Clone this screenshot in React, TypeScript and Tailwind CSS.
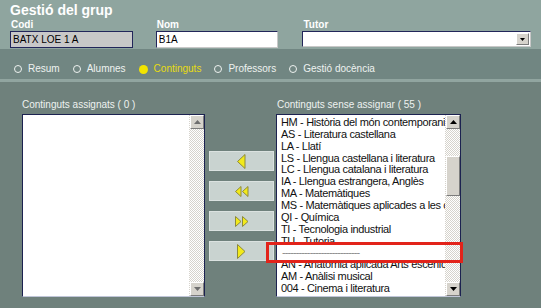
import React from "react";

const font = { fontFamily: '"Liberation Sans", Arial, sans-serif' };

const pending = [
  "HM - Història del món contemporani",
  "AS - Literatura castellana",
  "LA - Llatí",
  "LS - Llengua castellana i literatura",
  "LC - Llengua catalana i literatura",
  "IA - Llengua estrangera, Anglès",
  "MA - Matemàtiques",
  "MS - Matemàtiques aplicades a les ciències socials",
  "QI - Química",
  "TI - Tecnologia industrial",
  "TU - Tutoria",
  "---",
  "AN - Anatomia aplicada Arts escèniques",
  "AM - Anàlisi musical",
  "004 - Cinema i literatura",
];

const tabs = ["Resum", "Alumnes", "Continguts", "Professors", "Gestió docència"];

function Arrow({ dir, dim }: { dir: "up" | "down"; dim?: boolean }) {
  return (
    <div className="h-[14px] w-[14px] shrink-0 flex items-center justify-center bg-[#d6d3cc] border border-t-white border-l-white border-r-[#7c7c7c] border-b-[#7c7c7c]">
      <svg width="7" height="4" viewBox="0 0 7 4">
        <path
          d={dir === "up" ? "M0 4 L3.5 0 L7 4 Z" : "M0 0 L3.5 4 L7 0 Z"}
          fill={dim ? "#6e6e6e" : "#000"}
        />
      </svg>
    </div>
  );
}

function Scrollbar({ thumb, dim }: { thumb?: boolean; dim?: boolean }) {
  return (
    <div className="w-[15px] h-full flex flex-col bg-[repeating-conic-gradient(#ffffff_0_25%,#d6d3cc_0_50%)] bg-[length:2px_2px] pl-[1px]">
      <Arrow dir="up" dim={dim} />
      <div className="flex-1 flex flex-col">
        {thumb && (
          <div className="mt-[27px] h-[40px] w-[14px] bg-[#d6d3cc] border border-t-white border-l-white border-r-[#7c7c7c] border-b-[#7c7c7c]" />
        )}
      </div>
      <Arrow dir="down" dim={dim} />
    </div>
  );
}

function Tri({ left, x = 0, w = 8, h = 15 }: { left?: boolean; x?: number; w?: number; h?: number }) {
  const d = left
    ? `M${x + w} 0.5 L${x + 0.5} ${h / 2} L${x + w} ${h - 0.5} Z`
    : `M${x + 0.5} 0.5 L${x + w} ${h / 2} L${x + 0.5} ${h - 0.5} Z`;
  return <path d={d} fill="#f2ea1a" stroke="#8c8a3c" strokeWidth="1" />;
}

function MoveButton({ kind }: { kind: "l" | "ll" | "rr" | "r" }) {
  return (
    <button className="h-[20px] w-[65px] flex items-center justify-center bg-[#c9d3d0] border border-[#dbe2e0]">
      {kind === "l" && (
        <svg width="9" height="15" viewBox="0 0 9 15">
          <Tri left />
        </svg>
      )}
      {kind === "r" && (
        <svg width="9" height="15" viewBox="0 0 9 15">
          <Tri />
        </svg>
      )}
      {kind === "ll" && (
        <svg width="14" height="11" viewBox="0 0 14 11">
          <Tri left x={0} w={6} h={11} />
          <Tri left x={7} w={6} h={11} />
        </svg>
      )}
      {kind === "rr" && (
        <svg width="14" height="11" viewBox="0 0 14 11">
          <Tri x={0} w={6} h={11} />
          <Tri x={7} w={6} h={11} />
        </svg>
      )}
    </button>
  );
}

export default function App() {
  return (
    <div className="relative w-[541px] h-[308px] overflow-hidden flex flex-col bg-[#6f817c]" style={font}>
      {/* Header */}
      <div className="h-[49px] bg-[#8fa59f] px-[10px] pt-[3px]">
        <div className="text-[14px] leading-[15px] font-bold text-white">Gestió del grup</div>
        <div className="flex mt-[1px]">
          <div className="w-[123px]">
            <div className="text-[10px] leading-[11px] font-bold text-white pl-[1px]">Codi</div>
            <div className="mt-[1px] h-[17px] bg-[#c8c8c8] border border-[#22265a] text-[10px] leading-[15px] pl-[2px] text-black">
              BATX LOE 1 A
            </div>
          </div>
          <div className="w-[123px] ml-[23px]">
            <div className="text-[10px] leading-[11px] font-bold text-white pl-[1px]">Nom</div>
            <div className="mt-[1px] h-[17px] bg-white border border-[#22265a] border-b-[#c8c8c8] border-r-[#c8c8c8] text-[10px] leading-[15px] pl-[2px] text-black">
              B1A
            </div>
          </div>
          <div className="w-[229px] ml-[24px]">
            <div className="text-[10px] leading-[11px] font-bold text-white pl-[1px]">Tutor</div>
            <div className="mt-[1px] h-[16px] bg-white border border-[#22265a] border-b-[#c8c8c8] border-r-[#c8c8c8] flex justify-end items-center pr-[1px]">
              <div className="h-[12px] w-[13px] flex items-center justify-center bg-[#d6d3cc] border border-t-white border-l-white border-r-[#7c7c7c] border-b-[#7c7c7c]">
                <svg width="5" height="3" viewBox="0 0 5 3">
                  <path d="M0 0 L2.5 3 L5 0 Z" fill="#000" />
                </svg>
              </div>
            </div>
          </div>
        </div>
      </div>

      {/* Tabs */}
      <div className="h-[30px] bg-[#718682] flex items-start pt-[14px] pl-[14px] gap-[13px] text-[10px] leading-[12px]">
        {tabs.map((t) => {
          const on = t === "Continguts";
          return (
            <div key={t} className="flex items-center gap-[6px]">
              {on ? (
                <span className="w-[9px] h-[9px] rounded-full bg-[#f2e400]" />
              ) : (
                <span className="w-[8px] h-[8px] rounded-full border border-[#eef2f0]" />
              )}
              <span className={on ? "text-[#e8dc12]" : "text-[#eef2f0]"}>{t}</span>
            </div>
          );
        })}
      </div>
      <div className="h-[3px] bg-[#91a5a0]" />

      {/* Main */}
      <div className="flex-1 flex px-[22px] pt-[17px]">
        <div className="w-[183px] flex flex-col">
          <div className="text-[10px] leading-[12px] text-[#eef2f0]">Continguts assignats ( 0 )</div>
          <div className="mt-[3px] h-[183px] bg-white border border-[#1c2250] border-b-[#c0c6d8] flex justify-end">
            <Scrollbar dim />
          </div>
        </div>

        <div className="ml-[4px] mt-[52px] flex flex-col gap-[10px]">
          <MoveButton kind="l" />
          <MoveButton kind="ll" />
          <MoveButton kind="rr" />
          <MoveButton kind="r" />
        </div>

        <div className="ml-[2px] w-[185px] flex flex-col">
          <div className="text-[10px] leading-[12px] text-[#eef2f0] pl-[1px]">Continguts sense assignar ( 55 )</div>
          <div className="mt-[3px] h-[183px] bg-white border border-[#1c2250] border-b-[#c0c6d8] flex">
            <div className="flex-1 overflow-hidden pl-[4px] pt-[2px] text-[11px] leading-[11.86px] tracking-[-0.35px] text-[#111]">
              {pending.map((p) =>
                p === "---" ? (
                  <div key={p} className="h-[11.86px] leading-[11.86px] whitespace-nowrap text-[#8a8a8a] text-[11px] tracking-[-0.9px] pl-[1px]">
                    ----------------------------
                  </div>
                ) : (
                  <div key={p} className="whitespace-nowrap">
                    {p}
                  </div>
                )
              )}
            </div>
            <Scrollbar thumb />
          </div>
        </div>
      </div>

      {/* Highlight box */}
      <div className="absolute left-[266px] top-[242px] w-[197px] h-[21px] border-[3px] border-[#e2231a]" />
    </div>
  );
}
